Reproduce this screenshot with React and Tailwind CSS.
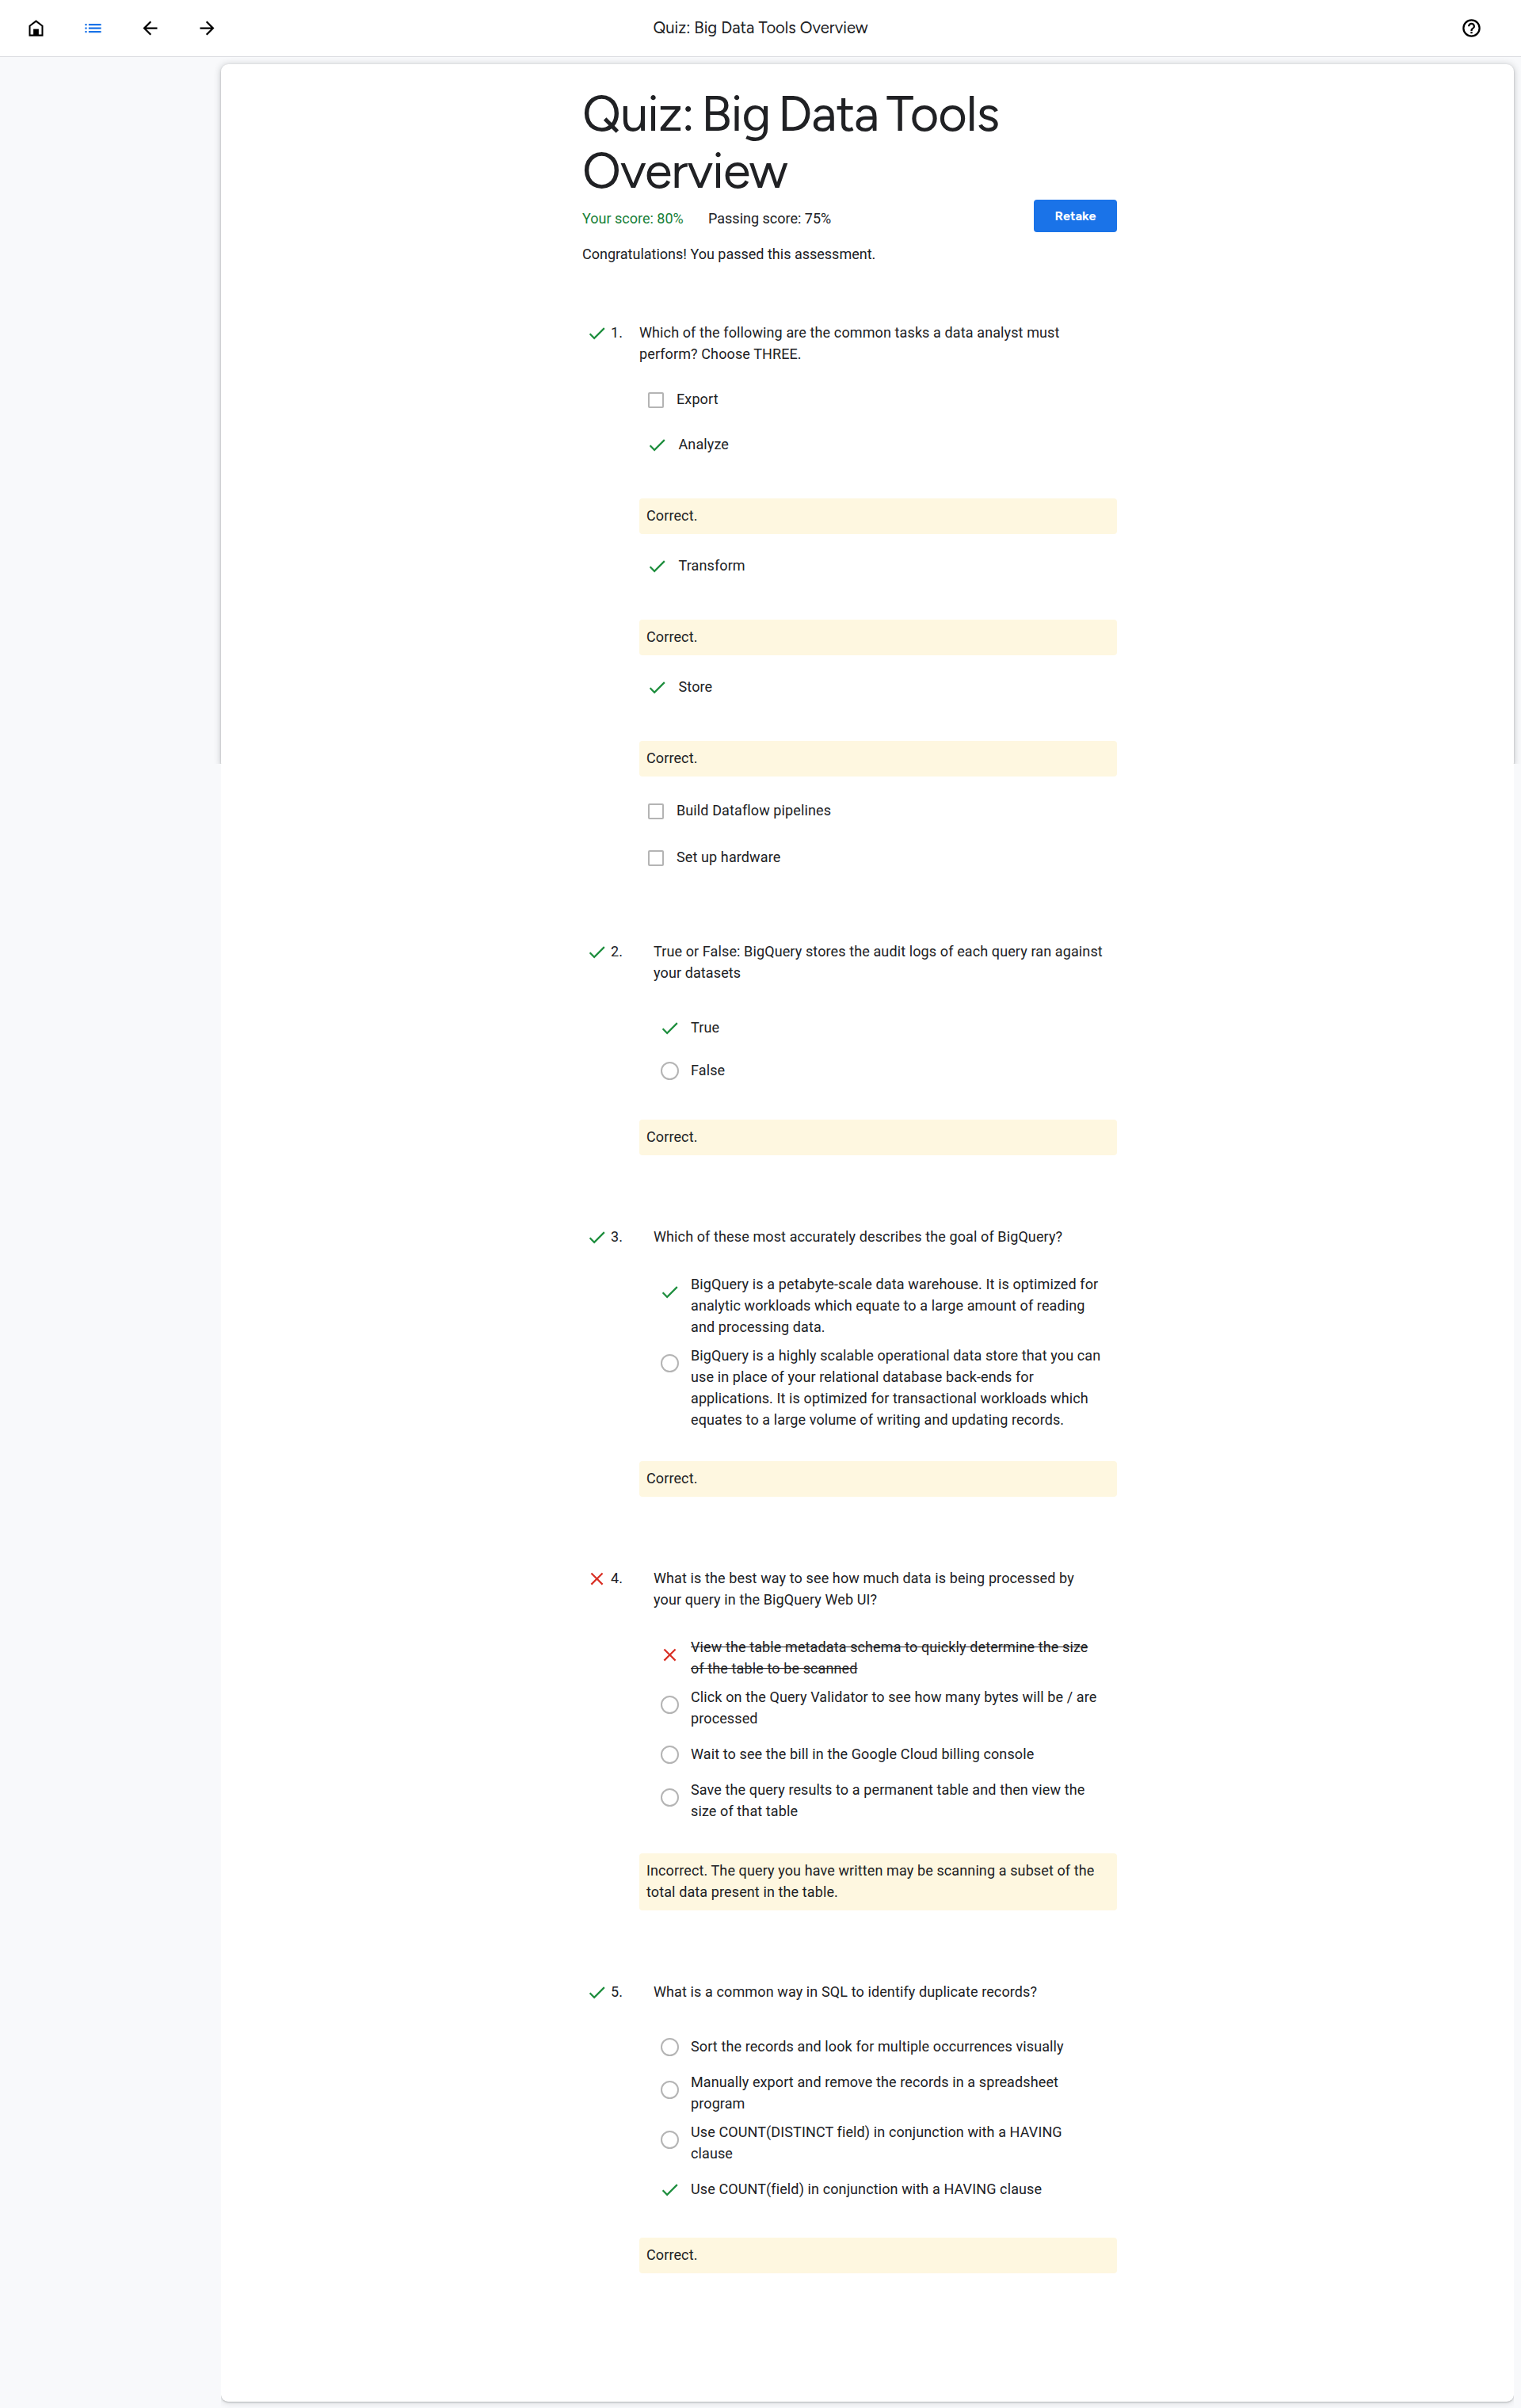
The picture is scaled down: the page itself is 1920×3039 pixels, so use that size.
const Check = () => (
  <svg width="27" height="27" viewBox="0 0 24 24" fill="#1e8e3e" className="block shrink-0"><path d="M9 16.17 4.83 12l-1.42 1.41L9 19 21 7l-1.41-1.41z" /></svg>
)
const Cross = () => (
  <svg width="27" height="27" viewBox="0 0 24 24" fill="#d93025" className="block shrink-0"><path d="M19 6.41 17.59 5 12 10.59 6.41 5 5 6.41 10.59 12 5 17.59 6.41 19 12 13.41 17.59 19 19 17.59 13.41 12z" /></svg>
)
const Radio = () => <span className="block size-[23px] shrink-0 rounded-full border-2 border-[#b4b4b4]" />

const Feedback = ({ children, className }) => (
  <div className={`rounded-[4px] bg-[#fef7e0] px-[9px] pt-[8px] pb-[10px] ${className}`}>{children}</div>
)

const Question = ({ n, wrong, indent, title, className, children }) => (
  <section className={`flex tracking-[0.1125px] ${className}`}>
    <div className="flex w-[72px] shrink-0 gap-1 pl-[5px]">
      {wrong ? <Cross /> : <Check />}
      <span className="-mt-px">{n}.</span>
    </div>
    <div className="flex w-[603px] shrink-0 flex-col">
      <h2 className={`-mt-px mb-px ${indent ?? ''}`}>{title}</h2>
      {children}
    </div>
  </section>
)

const CheckRow = ({ mark, label, className }) => (
  <div className={`flex h-[27px] ${className}`}>
    {mark ? (
      <span className="mr-[13.5px] ml-[9px]"><Check /></span>
    ) : (
      <span className="mt-[4px] mr-[16px] ml-[11px] block size-5 shrink-0 rounded-[2px] border-2 border-[#b4b4b4]" />
    )}
    <span className="-mt-px">{label}</span>
  </div>
)

const RadioRow = ({ mark, lines }) => (
  <div className="flex min-h-[54px] items-center">
    <span className="mr-[13px] ml-[25px] flex h-[54px] w-[27px] shrink-0 items-center justify-center self-start">
      {mark === 'check' ? <Check /> : mark === 'cross' ? <Cross /> : <Radio />}
    </span>
    <div className={mark === 'cross' ? 'pt-[3.5px] pb-[5.5px] line-through' : 'pt-[3.5px] pb-[5.5px]'}>
      {lines.map((l) => <div key={l} className="whitespace-nowrap">{l}</div>)}
    </div>
  </div>
)

const Pair = ({ lines }) => lines.map((l) => <span key={l} className="block whitespace-nowrap">{l}</span>)

const Icon = ({ d, className }) => (
  <svg width="27" height="27" viewBox="0 0 24 24" fill="currentColor" className={className}><path d={d} /></svg>
)

export default function App() {
  return (
    <div className="flex h-[3039px] w-[1920px] flex-col bg-[#f8f9fb] font-['Roboto',sans-serif] text-[18px] leading-[27px] text-[#202124]">
      <header className="flex h-[72px] shrink-0 items-center border-b border-[#dadce0] bg-white">
        <div className="flex w-[360px] shrink-0 gap-[45px] pl-[31.5px] text-black">
          <svg width="27" height="27" viewBox="0 0 24 24"><path d="M4.900 20.100V9.450L12 4.100l7.100 5.350V20.100z" fill="none" stroke="currentColor" strokeWidth="1.800" /><path d="M9 13h6v7H9z" /></svg>
          <Icon className="text-[#1a73e8]" d="M3 13h2v-2H3zm0 4h2v-2H3zm0-8h2V7H3zm4 4h14v-2H7zm0 4h14v-2H7zM7 7v2h14V7z" />
          <Icon d="M20 11H7.830l5.590-5.590L12 4l-8 8 8 8 1.410-1.410L7.830 13H20z" />
          <Icon d="m12 4-1.410 1.410L16.170 11H4v2h12.170l-5.580 5.590L12 20l8-8z" />
        </div>
        <h2 className="flex flex-1 justify-center font-['Google_Sans','Product_Sans','Figtree','Outfit','Roboto',sans-serif] text-[20.25px] whitespace-nowrap">Quiz: Big Data Tools Overview</h2>
        <div className="flex w-[360px] shrink-0 justify-end pr-[49.5px] text-black">
          <Icon d="M11 18h2v-2h-2zm1-16a10 10 0 1 0 0 20 10 10 0 0 0 0-20m0 18a8 8 0 1 1 0-16 8 8 0 0 1 0 16m0-14a4 4 0 0 0-4 4h2a2 2 0 1 1 4 0c0 2-3 1.750-3 5h2c0-2.250 3-2.500 3-5a4 4 0 0 0-4-4" />
        </div>
      </header>
      <main className="relative mt-[9px] ml-[279px] h-[2950px] w-[1632px] rounded-[9px] bg-white pl-[456px]">
        <div className="pointer-events-none absolute inset-x-0 top-0 h-[890px] rounded-[9px] shadow-[0_1px_2px_rgba(60,64,67,0.3),0_1px_8px_rgba(60,64,67,0.3)] [clip-path:inset(-8px_-10px_7px_-10px)]" />
        <div className="pointer-events-none absolute inset-x-0 bottom-0 h-10 rounded-[9px] shadow-[0_1px_2px_rgba(60,64,67,0.3),0_2px_8px_rgba(60,64,67,0.15)] [clip-path:inset(32px_0_-9px_0)]" />
        <div className="relative w-[675px]">
          <h1 className="pt-[26px] pb-px font-['Google_Sans','Product_Sans','Figtree','Outfit','Roboto',sans-serif] text-[63px] leading-[72px] tracking-[-1px] [word-spacing:-5px]"><Pair lines={['Quiz: Big Data Tools', 'Overview']} /></h1>
          <div className="flex h-[42px]">
            <span className="mt-[10px] w-[159px] text-[#188038]">Your score: 80%</span>
            <span className="mt-[10px]">Passing score: 75%</span>
            <button className="ml-auto h-[41px] w-[105px] rounded-[4px] bg-[#1a73e8] pb-px font-['Google_Sans','Product_Sans','Figtree','Outfit','Roboto',sans-serif] text-[16.25px] font-bold text-white">Retake</button>
          </div>
          <p className="mt-[13px]">Congratulations! You passed this assessment.</p>

          <Question n={1} title={<Pair lines={['Which of the following are the common tasks a data analyst must', 'perform? Choose THREE.']} />} className="mt-[73px]">
            <CheckRow label="Export" className="mt-[30px]" />
            <CheckRow mark label="Analyze" className="mt-[30px]" />
            <Feedback className="mt-[54px]">Correct.</Feedback>
            <CheckRow mark label="Transform" className="mt-[27px]" />
            <Feedback className="mt-[54px]">Correct.</Feedback>
            <CheckRow mark label="Store" className="mt-[27px]" />
            <Feedback className="mt-[54px]">Correct.</Feedback>
            <CheckRow label="Build Dataflow pipelines" className="mt-[30px]" />
            <CheckRow label="Set up hardware" className="mt-[32px]" />
          </Question>

          <Question n={2} indent="pl-[18px]" title={<Pair lines={['True or False: BigQuery stores the audit logs of each query ran against', 'your datasets']} />} className="mt-[92px]">
            <div className="mt-[28px]">
              <RadioRow mark="check" lines={['True']} />
              <RadioRow lines={['False']} />
            </div>
            <Feedback className="mt-[35px]">Correct.</Feedback>
          </Question>

          <Question n={3} indent="pl-[18px]" title="Which of these most accurately describes the goal of BigQuery?" className="mt-[90px]">
            <div className="mt-[28px]">
              <RadioRow mark="check" lines={['BigQuery is a petabyte-scale data warehouse. It is optimized for', 'analytic workloads which equate to a large amount of reading', 'and processing data.']} />
              <RadioRow lines={['BigQuery is a highly scalable operational data store that you can', 'use in place of your relational database back-ends for', 'applications. It is optimized for transactional workloads which', 'equates to a large volume of writing and updating records.']} />
            </div>
            <Feedback className="mt-[34px]">Correct.</Feedback>
          </Question>

          <Question n={4} wrong indent="pl-[18px]" title={<Pair lines={['What is the best way to see how much data is being processed by', 'your query in the BigQuery Web UI?']} />} className="mt-[90px]">
            <div className="mt-[28px]">
              <RadioRow mark="cross" lines={['View the table metadata schema to quickly determine the size', 'of the table to be scanned']} />
              <RadioRow lines={['Click on the Query Validator to see how many bytes will be / are', 'processed']} />
              <RadioRow lines={['Wait to see the bill in the Google Cloud billing console']} />
              <RadioRow lines={['Save the query results to a permanent table and then view the', 'size of that table']} />
            </div>
            <Feedback className="mt-[35px]"><Pair lines={['Incorrect. The query you have written may be scanning a subset of the', 'total data present in the table.']} /></Feedback>
          </Question>

          <Question n={5} indent="pl-[18px]" title="What is a common way in SQL to identify duplicate records?" className="mt-[90px]">
            <div className="mt-[28px]">
              <RadioRow lines={['Sort the records and look for multiple occurrences visually']} />
              <RadioRow lines={['Manually export and remove the records in a spreadsheet', 'program']} />
              <RadioRow lines={['Use COUNT(DISTINCT field) in conjunction with a HAVING', 'clause']} />
              <RadioRow mark="check" lines={['Use COUNT(field) in conjunction with a HAVING clause']} />
            </div>
            <Feedback className="mt-[34px]">Correct.</Feedback>
          </Question>
        </div>
      </main>
    </div>
  )
}
